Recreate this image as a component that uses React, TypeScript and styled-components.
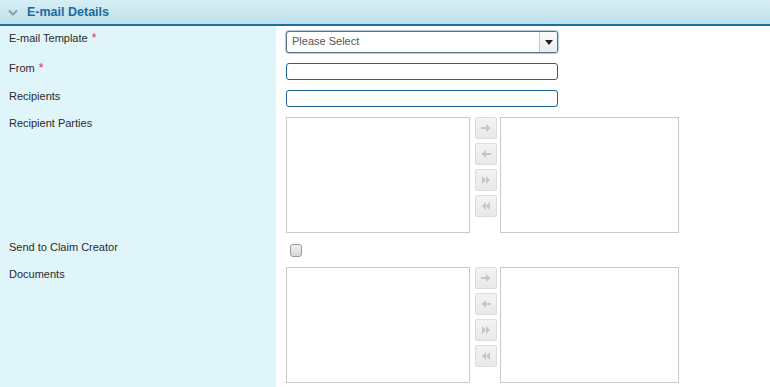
import React from "react";
import styled, { createGlobalStyle } from "styled-components";

const Global = createGlobalStyle`
  html, body { margin: 0; padding: 0; background: #fff; }
  body { font-family: "Liberation Sans", Arial, sans-serif; font-size: 11px; color: #333; }
`;

const Section = styled.section`
  width: 770px;
  min-height: 387px;
  display: flex;
  flex-direction: column;
`;

const Header = styled.div`
  height: 24px;
  display: flex;
  align-items: center;
  gap: 9px;
  padding-left: 8px;
  background: linear-gradient(#d6eef5, #bde0eb);
  border-bottom: 2px solid #1c6ea4;
`;

const Title = styled.h2`
  margin: 0;
  font-size: 12.5px;
  font-weight: bold;
  color: #1b6aa0;
`;

const Body = styled.div`
  flex: 1;
  display: grid;
  grid-template-columns: 276px 1fr;
  background: linear-gradient(to right, #dff5fa 276px, #fff 276px);
`;

const Label = styled.div<{ $pt: number }>`
  padding: ${(p) => p.$pt}px 0 0 9px;
  line-height: 14px;
  color: #2b2b2b;
`;

const Req = styled.span`
  color: #e3245c;
  margin-left: 4px;
  font-size: 12px;
`;

const Cell = styled.div`
  padding: 5px 0 5px 10px;
  display: flex;
  align-items: flex-start;
`;

const SelectBox = styled.div`
  width: 270px;
  height: 20px;
  border: 1px solid #5b6f80;
  border-radius: 3px;
  box-shadow: 0 0 1px 1px #b9cbd8;
  display: flex;
  align-items: stretch;
  background: #fff;
`;

const SelectText = styled.span`
  flex: 1;
  padding-left: 5px;
  line-height: 19px;
  color: #555;
`;

const SelectArrow = styled.span`
  width: 17px;
  border-left: 1px solid #c8c8c8;
  background: linear-gradient(#fafafa, #ececec);
  display: flex;
  align-items: center;
  justify-content: center;
  border-radius: 0 2px 2px 0;
`;

const TextInput = styled.input`
  box-sizing: border-box;
  width: 272px;
  height: 17px;
  margin: 0;
  border: 1px solid #1c6496;
  border-radius: 3px;
  padding: 0 4px;
  font: inherit;
  outline: none;
`;

const Picker = styled.div`
  display: flex;
  align-items: flex-start;
`;

const ListBox = styled.div<{ $w: number }>`
  box-sizing: border-box;
  width: ${(p) => p.$w}px;
  height: 116px;
  border: 1px solid #c9c9c9;
  background: #fff;
`;

const Buttons = styled.div`
  display: flex;
  flex-direction: column;
  gap: 4px;
  margin: 0 3px 0 5px;
`;

const MoveButton = styled.button`
  box-sizing: border-box;
  width: 22px;
  height: 22px;
  padding: 0;
  border: 1px solid #dcdcdc;
  border-radius: 2px;
  background: linear-gradient(#f3f3f3, #e8e8e8);
  display: flex;
  align-items: center;
  justify-content: center;
`;

const Check = styled.span`
  box-sizing: border-box;
  display: block;
  width: 12px;
  height: 13px;
  margin: 1px 0 0 4px;
  border: 1px solid #9a9a9a;
  border-radius: 3px;
  background: linear-gradient(#f0f0f0, #d8d8d8);
`;

const Chevron = () => (
  <svg width="10" height="7" viewBox="0 0 10 7">
    <path d="M1 1.5 L5 5.5 L9 1.5" fill="none" stroke="#8b9da6" strokeWidth="2" />
  </svg>
);

const icons: Record<string, string> = {
  right: "M0 3 H5 V0 L9.5 4 L5 8 V5 H0 Z",
  left: "M10 3 H5 V0 L0.5 4 L5 8 V5 H10 Z",
  allRight: "M1 0 L5 4 L1 8 Z M5 0 L9 4 L5 8 Z",
  allLeft: "M9 0 L5 4 L9 8 Z M5 0 L1 4 L5 8 Z",
};

const MoveIcon = ({ kind }: { kind: string }) => (
  <svg width="10" height="8" viewBox="0 0 10 8">
    <path d={icons[kind]} fill="#c6c6c6" />
  </svg>
);

const DualList = () => (
  <Picker>
    <ListBox $w={184} />
    <Buttons>
      {["right", "left", "allRight", "allLeft"].map((k) => (
        <MoveButton key={k}>
          <MoveIcon kind={k} />
        </MoveButton>
      ))}
    </Buttons>
    <ListBox $w={179} />
  </Picker>
);

export default function App() {
  return (
    <>
      <Global />
      <Section>
        <Header>
          <Chevron />
          <Title>E-mail Details</Title>
        </Header>
        <Body>
          <Label $pt={5}>
            E-mail Template<Req>*</Req>
          </Label>
          <Cell>
            <SelectBox>
              <SelectText>Please Select</SelectText>
              <SelectArrow>
                <svg width="8" height="5" viewBox="0 0 8 5">
                  <path d="M0 0 H8 L4 5 Z" fill="#222" />
                </svg>
              </SelectArrow>
            </SelectBox>
          </Cell>

          <Label $pt={3}>
            From<Req>*</Req>
          </Label>
          <Cell>
            <TextInput />
          </Cell>

          <Label $pt={4}>Recipients</Label>
          <Cell>
            <TextInput />
          </Cell>

          <Label $pt={4}>Recipient Parties</Label>
          <Cell>
            <DualList />
          </Cell>

          <Label $pt={2}>Send to Claim Creator</Label>
          <Cell>
            <Check />
          </Cell>

          <Label $pt={5}>Documents</Label>
          <Cell>
            <DualList />
          </Cell>
        </Body>
      </Section>
    </>
  );
}
